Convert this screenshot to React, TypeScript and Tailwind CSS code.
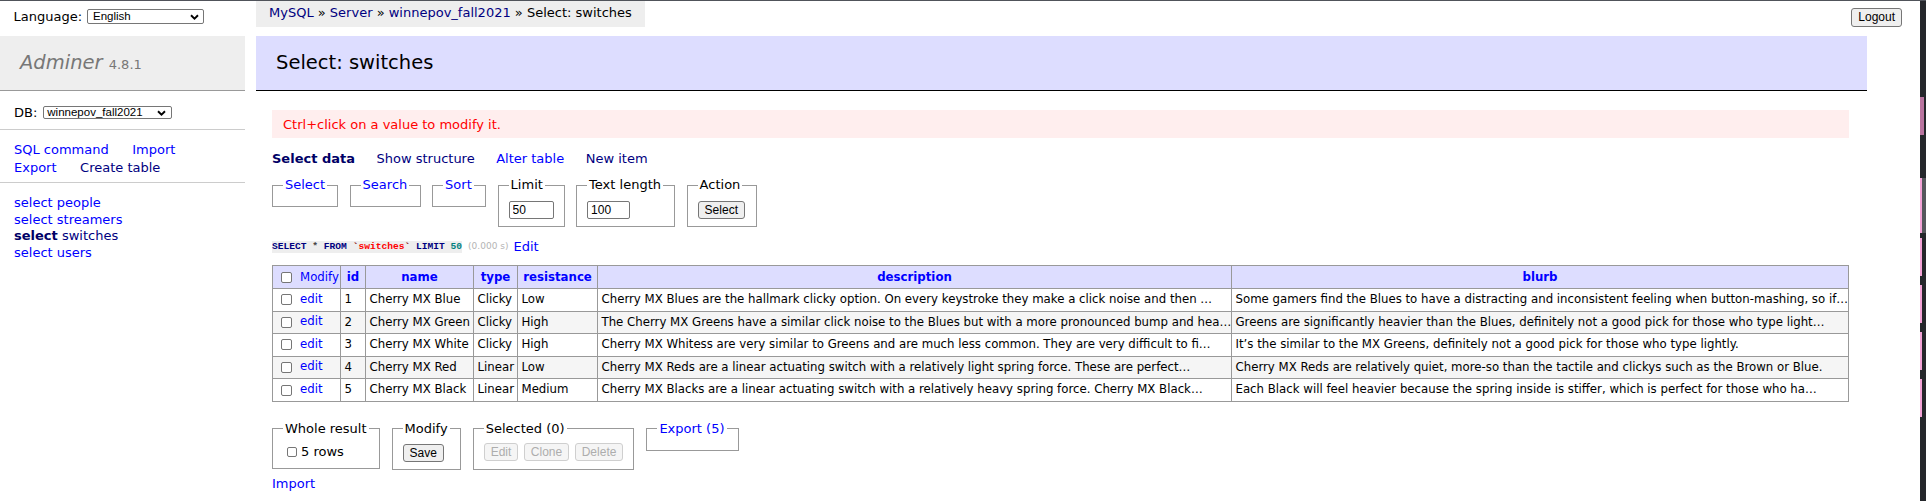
import React from 'react';

interface SwitchRow {
  id: number;
  name: string;
  type: string;
  resistance: string;
  description: string;
  blurb: string;
}

const rows: SwitchRow[] = [
  {
    id: 1,
    name: 'Cherry MX Blue',
    type: 'Clicky',
    resistance: 'Low',
    description: 'Cherry MX Blues are the hallmark clicky option. On every keystroke they make a click noise and then …',
    blurb: 'Some gamers find the Blues to have a distracting and inconsistent feeling when button-mashing, so if…',
  },
  {
    id: 2,
    name: 'Cherry MX Green',
    type: 'Clicky',
    resistance: 'High',
    description: 'The Cherry MX Greens have a similar click noise to the Blues but with a more pronounced bump and hea…',
    blurb: 'Greens are significantly heavier than the Blues, definitely not a good pick for those who type light…',
  },
  {
    id: 3,
    name: 'Cherry MX White',
    type: 'Clicky',
    resistance: 'High',
    description: 'Cherry MX Whitess are very similar to Greens and are much less common. They are very difficult to fi…',
    blurb: 'It’s the similar to the MX Greens, definitely not a good pick for those who type lightly.',
  },
  {
    id: 4,
    name: 'Cherry MX Red',
    type: 'Linear',
    resistance: 'Low',
    description: 'Cherry MX Reds are a linear actuating switch with a relatively light spring force. These are perfect…',
    blurb: 'Cherry MX Reds are relatively quiet, more-so than the tactile and clickys such as the Brown or Blue.',
  },
  {
    id: 5,
    name: 'Cherry MX Black',
    type: 'Linear',
    resistance: 'Medium',
    description: 'Cherry MX Blacks are a linear actuating switch with a relatively heavy spring force. Cherry MX Black…',
    blurb: 'Each Black will feel heavier because the spring inside is stiffer, which is perfect for those who ha…',
  },
];

const Chevron = () => (
  <svg width="9" height="6" viewBox="0 0 9 6" className="shrink-0">
    <path d="M1 1.2L4.5 4.6L8 1.2" fill="none" stroke="#000" strokeWidth="1.9" />
  </svg>
);

const SelectBox = ({ value, className }: { value: string; className: string }) => (
  <div
    className={`flex items-center justify-between rounded-[2px] border border-[#767676] bg-white font-['Liberation_Sans',Arial,sans-serif] leading-none text-black ${className}`}
  >
    <span>{value}</span>
    <Chevron />
  </div>
);

const Check = ({ className = '' }: { className?: string }) => (
  <input
    type="checkbox"
    className={`m-0 shrink-0 appearance-none rounded-[2px] border border-[#767676] bg-white ${className}`}
  />
);

const Btn = ({ label, disabled = false, className = '' }: { label: string; disabled?: boolean; className?: string }) => (
  <button
    type="button"
    disabled={disabled}
    className={`rounded-[3px] border px-[6px] font-['Liberation_Sans',Arial,sans-serif] text-[12px] leading-none ${
      disabled ? 'border-[#cfcfcf] bg-[#f5f5f5] text-[#adadad]' : 'border-[#767676] bg-[#efefef] text-black'
    } ${className}`}
  >
    {label}
  </button>
);

const Box = ({
  legend,
  link = false,
  className,
  children,
}: {
  legend: string;
  link?: boolean;
  className: string;
  children?: React.ReactNode;
}) => (
  <fieldset className={`shrink-0 border border-[#999] px-[10px] pt-[6px] pb-[7px] ${className}`}>
    <legend className={`whitespace-nowrap px-[2px] leading-[16px] ${link ? 'text-[#0000ff]' : 'text-black'}`}>
      {legend}
    </legend>
    {children}
  </fieldset>
);

const cell = 'overflow-hidden whitespace-nowrap border border-[#999] px-[3.5px] py-[3px] leading-[15.6px]';
const head = 'overflow-hidden whitespace-nowrap border border-[#999] px-[3.5px] py-[3px] leading-[16px] font-bold text-[#0000ff]';

export default function App() {
  return (
    <div className="flex h-[501px] w-[1926px] overflow-hidden border-t border-[#50535a] bg-white font-['DejaVu_Sans',Verdana,sans-serif] text-[13px] text-black">
      <div className="relative flex w-[1920px] shrink-0">
        {/* menu */}
        <aside className="w-[245px] shrink-0">
          <div className="h-[35px] pl-[13.5px] pt-[8px]">
            <div className="flex h-[15px] items-center gap-[5px]">
              <span>Language:</span>
              <SelectBox value="English" className="h-[15px] w-[117px] pl-[5px] pr-[4px] text-[11.5px]" />
            </div>
          </div>

          <h1 className="h-[55px] border-b border-[#999] bg-[#eee] pl-[20px] text-[19.5px] leading-[54px] font-normal italic text-[#777]">
            Adminer <span className="text-[13px] not-italic">4.8.1</span>
          </h1>

          <div className="flex h-[39px] items-center gap-[6px] border-b border-[#ccc] pl-[14px] pt-[5px]">
            <span>DB:</span>
            <SelectBox value="winnepov_fall2021" className="h-[13px] w-[129px] pl-[3px] pr-[5px] text-[11.5px]" />
          </div>

          <div className="border-b border-[#ccc] pl-[14px] pt-[11px] pb-[5px] leading-[18px]">
            <div className="flex gap-[23.5px]">
              <a className="text-[#0000ff]">SQL command</a>
              <a className="text-[#0000ff]">Import</a>
            </div>
            <div className="flex gap-[23.5px]">
              <a className="text-[#0000ff]">Export</a>
              <a className="text-[#000080]">Create table</a>
            </div>
          </div>

          <ul className="pl-[14px] pt-[12px] leading-[16.5px]">
            <li className="text-[#0000ff]">select people</li>
            <li className="text-[#0000ff]">select streamers</li>
            <li>
              <b className="text-[#000066]">select</b> <span className="text-[#000080]">switches</span>
            </li>
            <li className="text-[#0000ff]">select users</li>
          </ul>
        </aside>

        {/* content */}
        <main className="ml-[11px] w-[1611px] shrink-0">
          <div className="w-fit bg-[#eee] px-[13px] pb-[2px] leading-[24px]">
            <a className="text-[#000080]">MySQL</a> » <a className="text-[#000080]">Server</a> »{' '}
            <a className="text-[#000080]">winnepov_fall2021</a> » Select: switches
          </div>

          <h2 className="mt-[9px] h-[55px] border-b border-black bg-[#ddf] pl-[20px] text-[19.5px] leading-[54px] font-normal">
            Select: switches
          </h2>

          <div className="pl-[16px] pr-[18px]">
            <div className="mt-[19px] h-[28px] bg-[#fee] pl-[11px] pt-[1px] leading-[27px] text-[#ff0000]">
              Ctrl+click on a value to modify it.
            </div>

            <nav className="mt-[13px] flex gap-[21.5px] leading-[16px]">
              <b className="text-[#000066]">Select data</b>
              <a className="text-[#000080]">Show structure</a>
              <a className="text-[#0000ff]">Alter table</a>
              <a className="text-[#000080]">New item</a>
            </nav>

            <div className="mt-[10px] flex items-start gap-[11.5px]">
              <Box legend="Select" link className="w-[66px]" />
              <Box legend="Search" link className="w-[71px]" />
              <Box legend="Sort" link className="w-[54px]" />
              <Box legend="Limit" className="w-[66px]">
                <div className="h-[20px] pt-[1px]">
                  <input
                    readOnly
                    value="50"
                    className="h-[18px] w-[45px] rounded-[2px] border border-[#767676] px-[3px] font-['Liberation_Sans',Arial,sans-serif] text-[12px]"
                  />
                </div>
              </Box>
              <Box legend="Text length" className="w-[99px]">
                <div className="h-[20px] pt-[1px]">
                  <input
                    readOnly
                    value="100"
                    className="h-[18px] w-[43px] rounded-[2px] border border-[#767676] px-[3px] font-['Liberation_Sans',Arial,sans-serif] text-[12px]"
                  />
                </div>
              </Box>
              <Box legend="Action" className="w-[70px]">
                <div className="h-[20px] pt-[1px]">
                  <Btn label="Select" className="h-[18px]" />
                </div>
              </Box>
            </div>

            <div className="mt-[12px] flex h-[16px] items-center">
              <code className="bg-[#eee] font-['Liberation_Mono',monospace] text-[9.6px] leading-[12px] font-bold">
                <span className="text-[#000080]">SELECT</span> <span className="text-[#444]">*</span>{' '}
                <span className="text-[#000080]">FROM</span> <span className="text-[#800000]">`</span>
                <span className="text-[#ff0000]">switches</span>
                <span className="text-[#800000]">`</span> <span className="text-[#000080]">LIMIT</span>{' '}
                <span className="text-[#008080]">50</span>
              </code>
              <span className="ml-[6px] text-[9px] text-[#b4b4b4]">(0.000 s)</span>
              <a className="ml-[5px] text-[#0000ff]">Edit</a>
            </div>

            <table className="mt-[10px] w-[1576px] table-fixed border-collapse text-[11.75px]">
              <colgroup>
                <col className="w-[68px]" />
                <col className="w-[25px]" />
                <col className="w-[108px]" />
                <col className="w-[44px]" />
                <col className="w-[80px]" />
                <col className="w-[634px]" />
                <col className="w-[617px]" />
              </colgroup>
              <thead>
                <tr className="bg-[#ddf]">
                  <td className={`${cell} leading-[16px]`}>
                    <div className="flex items-center gap-[8px] pl-[4.5px]">
                      <Check className="h-[11px] w-[11px]" />
                      <a className="-mt-[1px] text-[#0000ff]">Modify</a>
                    </div>
                  </td>
                  <th className={head}>id</th>
                  <th className={head}>name</th>
                  <th className={head}>type</th>
                  <th className={head}>resistance</th>
                  <th className={head}>description</th>
                  <th className={head}>blurb</th>
                </tr>
              </thead>
              <tbody>
                {rows.map((row, i) => (
                  <tr key={row.id} className={i % 2 === 1 ? 'bg-[#f5f5f5]' : 'bg-white'}>
                    <td className={cell}>
                      <div className="flex items-center gap-[8px] pl-[4.5px]">
                        <Check className="h-[11px] w-[11px]" />
                        <a className="-mt-[1px] text-[#0000ff]">edit</a>
                      </div>
                    </td>
                    <td className={cell}>{row.id}</td>
                    <td className={cell}>{row.name}</td>
                    <td className={cell}>{row.type}</td>
                    <td className={cell}>{row.resistance}</td>
                    <td className={cell}>{row.description}</td>
                    <td className={cell}>{row.blurb}</td>
                  </tr>
                ))}
              </tbody>
            </table>

            <div className="mt-[19px] flex items-start gap-[12px]">
              <Box legend="Whole result" className="w-[107px]">
                <div className="flex h-[18px] items-center gap-[4px] pl-[4px]">
                  <Check className="h-[10px] w-[10px]" />
                  <span>5 rows</span>
                </div>
              </Box>
              <Box legend="Modify" className="w-[68px]">
                <div className="h-[19px]">
                  <Btn label="Save" className="h-[18.5px]" />
                </div>
              </Box>
              <Box legend="Selected (0)" className="w-[161px]">
                <div className="flex h-[19px] gap-[5.5px]">
                  <Btn label="Edit" disabled className="h-[18.5px]" />
                  <Btn label="Clone" disabled className="h-[18.5px]" />
                  <Btn label="Delete" disabled className="h-[18.5px]" />
                </div>
              </Box>
              <Box legend="Export (5)" link className="w-[93px] pb-[5px]" />
            </div>

            <div className="mt-[6px] leading-[16px]">
              <a className="text-[#0000ff]">Import</a>
            </div>
          </div>
        </main>

        <div className="absolute right-[18px] top-[6px]">
          <Btn label="Logout" className="h-[19px]" />
        </div>
      </div>

      {/* window edge with scroll markers */}
      <div className="relative w-[6px] shrink-0 bg-[#25272b]">
        <span className="absolute left-0 top-[96px] h-[38px] w-[4px] bg-[#b9749f]" />
        <span className="absolute left-[2px] top-[177px] h-[55px] w-[4px] bg-[#55575c]" />
        <span className="absolute left-0 top-[177px] h-[55px] w-[2px] bg-[#f3a3d6]" />
        <span className="absolute left-0 top-[237px] h-[38px] w-[2px] bg-[#f3a3d6]" />
        <span className="absolute left-0 top-[284px] h-[38px] w-[2px] bg-[#f3a3d6]" />
        <span className="absolute left-0 top-[331px] h-[38px] w-[2px] bg-[#f3a3d6]" />
        <span className="absolute left-0 top-[378px] h-[38px] w-[2px] bg-[#f3a3d6]" />
      </div>
    </div>
  );
}
